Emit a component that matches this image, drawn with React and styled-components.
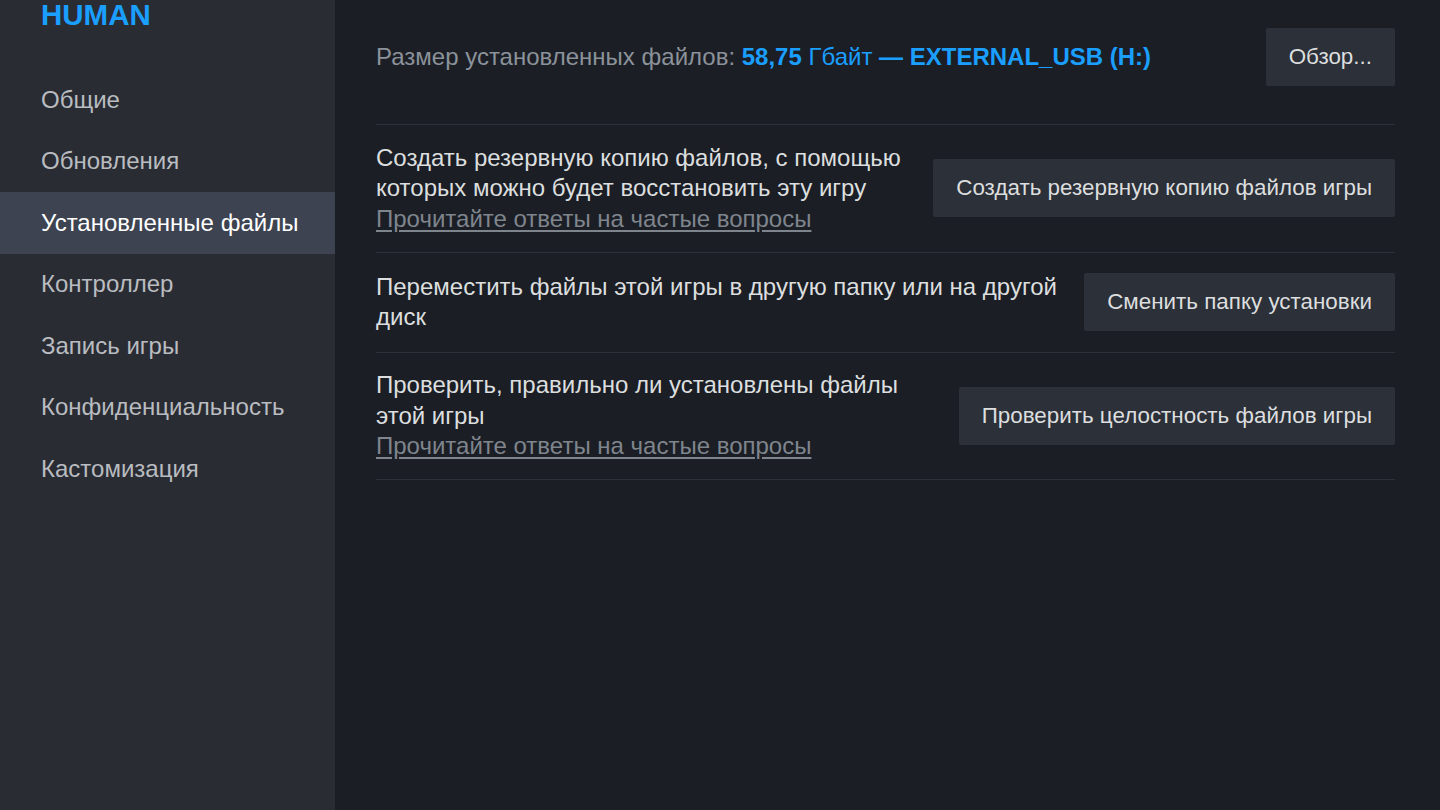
import React from "react";
import styled, { createGlobalStyle } from "styled-components";

const GlobalStyle = createGlobalStyle`
  html, body, #root {
    margin: 0;
    height: 100%;
  }
  body {
    background: #1b1e25;
    font-family: "Liberation Sans", Arial, sans-serif;
    overflow: hidden;
  }
`;

const Layout = styled.div`
  display: flex;
  height: 810px;
  width: 1440px;
`;

const Sidebar = styled.nav`
  width: 335px;
  flex-shrink: 0;
  background: #2a2c33;
  display: flex;
  flex-direction: column;
`;

const GameTitle = styled.div`
  height: 69px;
  padding-left: 41px;
  box-sizing: border-box;
  font-size: 29.5px;
  font-weight: 700;
  line-height: 30px;
  color: #1a9fff;
`;

const NavItem = styled.div`
  height: 61.5px;
  display: flex;
  align-items: center;
  padding-left: 41px;
  font-size: 24px;
  color: ${(p) => (p.$active ? "#ffffff" : "#b9bcc0")};
  background: ${(p) => (p.$active ? "#3d4350" : "transparent")};
  cursor: pointer;
`;

const Content = styled.main`
  flex: 1;
  padding: 0 45px 0 41px;
  display: flex;
  flex-direction: column;
`;

const Row = styled.div`
  display: flex;
  align-items: center;
  gap: 26px;
  box-sizing: border-box;
  min-height: ${(p) => (p.$summary ? "auto" : "100px")};
  padding: ${(p) => (p.$summary ? "28px 0 38px" : "17.5px 0")};
  border-bottom: 1px solid #2d3139;
`;

const Description = styled.div`
  flex: 1;
  font-size: 24px;
  line-height: 30.5px;
  color: #dcdedf;
`;

const SizeLabel = styled.div`
  flex: 1;
  font-size: 24px;
  color: #8b929a;
`;

const SizeValue = styled.span`
  color: #1a9fff;
  font-weight: ${(p) => (p.$bold ? 700 : 400)};
`;

const FaqLink = styled.a`
  display: block;
  color: #7f858d;
  text-decoration: underline;
  text-underline-offset: 3px;
  cursor: pointer;
`;

const ActionButton = styled.button`
  flex-shrink: 0;
  height: 58px;
  padding: 0 23px;
  border: none;
  border-radius: 2px;
  background: #2c3038;
  color: #dcdedf;
  font-family: "Liberation Sans", Arial, sans-serif;
  font-size: 22.4px;
  cursor: pointer;

  &:hover {
    background: #3d4350;
  }
`;

const navItems = [
  "Общие",
  "Обновления",
  "Установленные файлы",
  "Контроллер",
  "Запись игры",
  "Конфиденциальность",
  "Кастомизация",
];

const actions = [
  {
    text: "Создать резервную копию файлов, с помощью которых можно будет восстановить эту игру",
    faq: true,
    button: "Создать резервную копию файлов игры",
  },
  {
    text: "Переместить файлы этой игры в другую папку или на другой диск",
    faq: false,
    button: "Сменить папку установки",
  },
  {
    text: "Проверить, правильно ли установлены файлы этой игры",
    faq: true,
    button: "Проверить целостность файлов игры",
  },
];

export default function App() {
  return (
    <>
      <GlobalStyle />
      <Layout>
        <Sidebar>
          <GameTitle>HUMAN</GameTitle>
          {navItems.map((item) => (
            <NavItem key={item} $active={item === "Установленные файлы"}>
              {item}
            </NavItem>
          ))}
        </Sidebar>

        <Content>
          <Row $summary>
            <SizeLabel>
              Размер установленных файлов:{" "}
              <SizeValue $bold>58,75</SizeValue> <SizeValue>Гбайт</SizeValue>{" "}
              <SizeValue $bold>— EXTERNAL_USB (H:)</SizeValue>
            </SizeLabel>
            <ActionButton>Обзор...</ActionButton>
          </Row>

          {actions.map((a) => (
            <Row key={a.button}>
              <Description>
                {a.text}
                {a.faq && <FaqLink>Прочитайте ответы на частые вопросы</FaqLink>}
              </Description>
              <ActionButton>{a.button}</ActionButton>
            </Row>
          ))}
        </Content>
      </Layout>
    </>
  );
}
